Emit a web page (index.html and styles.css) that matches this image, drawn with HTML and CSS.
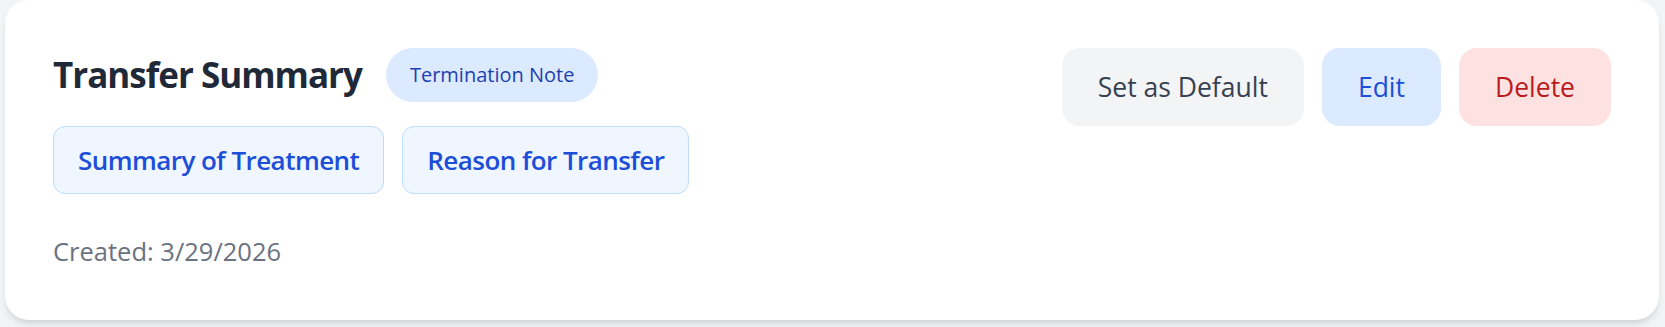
FILE: index.html
```html
<!DOCTYPE html>
<html lang="en">
<head>
<meta charset="utf-8">
<title>Transfer Summary</title>
<link rel="stylesheet" href="styles.css">
</head>
<body>
<div class="card">
  <div class="info">
    <div class="title-row">
      <h2 class="title">Transfer Summary</h2>
      <span class="pill">Termination Note</span>
    </div>
    <div class="chips">
      <span class="chip">Summary of Treatment</span>
      <span class="chip">Reason for Transfer</span>
    </div>
    <p class="created">Created: 3/29/2026</p>
  </div>
  <div class="actions">
    <button class="btn btn-default">Set as Default</button>
    <button class="btn btn-edit">Edit</button>
    <button class="btn btn-delete">Delete</button>
  </div>
</div>
</body>
</html>
```
FILE: styles.css
```css
* { box-sizing: border-box; }
html, body { margin: 0; }
body {
  background: #f3f4f6;
  padding: 0 6px 7px 5px;
  font-family: "Open Sans", "Noto Sans", "Liberation Sans", sans-serif;
}
.card {
  background: #ffffff;
  border-radius: 24px;
  padding: 48px;
  display: flex;
  justify-content: space-between;
  align-items: flex-start;
  box-shadow: 0 6px 9px -2px rgba(0,0,0,0.10), 0 3px 6px -3px rgba(0,0,0,0.10);
}
.title-row {
  display: flex;
  align-items: center;
  gap: 24px;
}
.title {
  margin: 0;
  font-size: 35px;
  line-height: 48px;
  font-weight: 700;
  letter-spacing: -1px;
  color: #1f2937;
}
.pill {
  background: #dbeafe;
  color: #1e40af;
  font-size: 20px;
  line-height: 30px;
  font-weight: 500;
  padding: 12px 24px;
  border-radius: 9999px;
}
.chips {
  display: flex;
  gap: 18px;
  margin-top: 24px;
}
.chip {
  background: #eff6ff;
  border: 1.5px solid #bfdbfe;
  color: #1d4ed8;
  font-size: 26px;
  line-height: 42px;
  font-weight: 600;
  letter-spacing: -0.55px;
  padding: 12px 24px;
  border-radius: 12px;
}
.created {
  margin: 36px 0 0;
  font-size: 25.5px;
  line-height: 42px;
  color: #6b7280;
}
.actions {
  display: flex;
  gap: 18px;
}
.btn {
  border: none;
  font-family: inherit;
  font-size: 26.5px;
  line-height: 42px;
  font-weight: 500;
  padding: 18px 36px;
  border-radius: 18px;
  cursor: pointer;
}
.btn-default { background: #f3f4f6; color: #374151; }
.btn-edit { background: #dbeafe; color: #1d4ed8; }
.btn-delete { background: #fee2e2; color: #b91c1c; }
```
